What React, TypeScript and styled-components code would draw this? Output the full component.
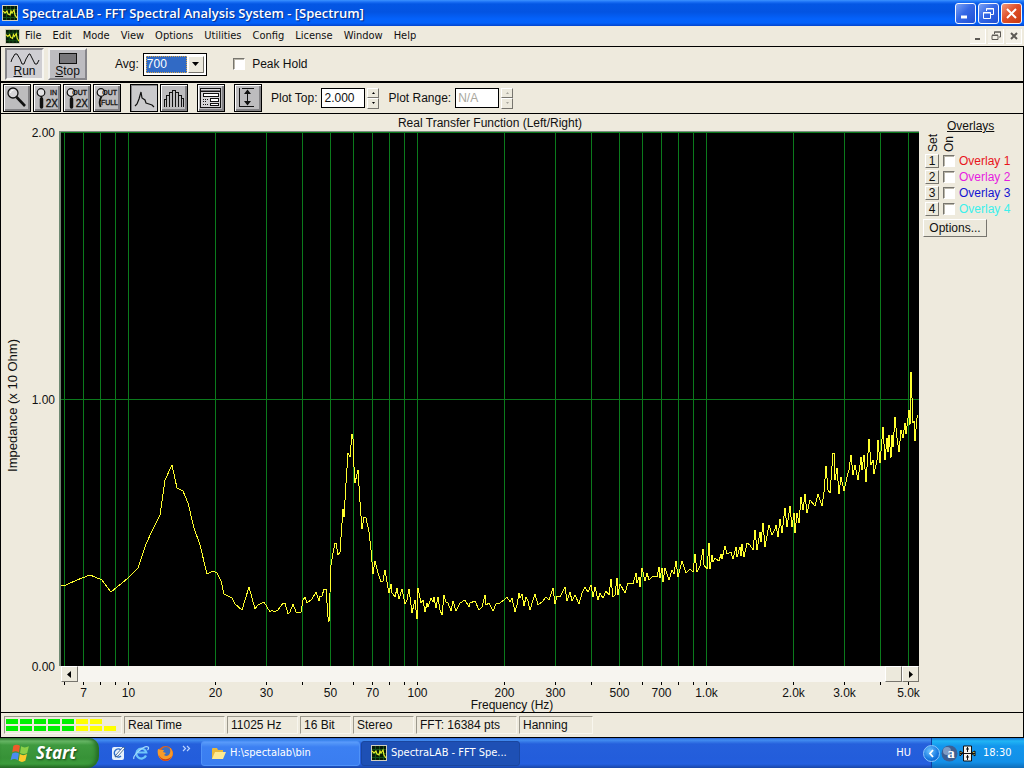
import React from "react";
import styled, { createGlobalStyle, css } from "styled-components";

const GlobalStyle = createGlobalStyle`
  *, *::before, *::after { box-sizing: border-box; }
  body { margin: 0; background: #eeeadd; }
  button, input, select { font: inherit; color: inherit; margin: 0; }
`;

const arial = `"Liberation Sans", Arial, sans-serif`;
const tahoma = `"DejaVu Sans Condensed", "DejaVu Sans", Tahoma, sans-serif`;

const Screen = styled.div`
  min-height: 100vh;
  display: flex;
  flex-direction: column;
  font-family: ${arial};
  font-size: 12px;
  line-height: 14px;
  color: #101010;
  background: #eeeadd;
`;

/* ---------- Title bar and menu ---------- */

const TitleBar = styled.header`
  height: 26px;
  flex: none;
  display: flex;
  align-items: center;
  gap: 4px;
  padding: 0 2px;
  background: linear-gradient(#3c93ff 0, #1a6ff5 2px, #0457e4 4px, #0354e2 12px, #0462fb 19px, #0362fa 23px, #0344cc 26px);
`;

const Title = styled.h1`
  flex: 1;
  margin: 0;
  font-family: "Open Sans", "Trebuchet MS", sans-serif;
  font-size: 13px;
  font-weight: 600;
  line-height: 18px;
  color: #fff;
  text-shadow: 1px 1px 1px #0a2a80;
  white-space: nowrap;
`;

const CaptionGroup = styled.div`
  display: flex;
  gap: 2px;
`;

const CaptionButton = styled.button<{ $close?: boolean }>`
  width: 21px;
  height: 21px;
  padding: 0;
  border: 1px solid #f4f7ff;
  border-radius: 3px;
  display: grid;
  place-items: center;
  background: ${(p) =>
    p.$close
      ? "linear-gradient(135deg, #f0997c, #e0502a 45%, #c8390f)"
      : "linear-gradient(135deg, #7ba2f5, #3568e6 45%, #1f4fd4)"};
`;

const MenuBar = styled.nav`
  height: 20px;
  flex: none;
  display: flex;
  align-items: center;
  padding: 0 2px 0 5px;
  font-family: ${tahoma};
  font-size: 11px;
`;

const MenuList = styled.div`
  flex: 1;
  display: flex;
  gap: 1px;
`;

const MenuItem = styled.button`
  border: 0;
  padding: 0 5px;
  background: none;
  line-height: 16px;
`;

const ChildButton = styled.button`
  width: 16px;
  height: 15px;
  margin-left: 2px;
  padding: 0;
  border: 0;
  border-bottom: 1px solid #fff;
  border-right: 1px solid #fff;
  background: #f3f0e6;
  display: grid;
  place-items: center;
`;

/* ---------- Toolbars ---------- */

const Workspace = styled.main`
  flex: 1;
  display: flex;
  flex-direction: column;
  border: 1px solid #000;
`;

const ToolRow = styled.div<{ $heavy?: boolean }>`
  flex: none;
  display: flex;
  align-items: center;
  height: ${(p) => (p.$heavy ? 36 : 31)}px;
  padding: ${(p) => (p.$heavy ? "0 4px" : "0 2px")};
  border-bottom: ${(p) => (p.$heavy ? 2 : 1)}px solid #000;
`;

const raised = css`
  border-style: solid;
  border-width: 1px;
  border-color: #fff #77756e #77756e #fff;
`;

const RunButton = styled.button<{ $down?: boolean }>`
  width: 39px;
  height: 32px;
  margin-right: 4px;
  padding: 2px 0 0;
  display: flex;
  flex-direction: column;
  align-items: center;
  justify-content: space-between;
  line-height: 13px;
  border: 2px solid;
  border-color: ${(p) => (p.$down ? "#85858a #f6f5f2 #f6f5f2 #85858a" : "#f2f1ee #87868a #87868a #f2f1ee")};
  background: ${(p) => (p.$down ? "#cfced2" : "#bdbcc0")};
`;

const Field = styled.label<{ $left?: number }>`
  display: flex;
  align-items: center;
  gap: 4px;
  margin-left: ${(p) => p.$left ?? 0}px;
  white-space: nowrap;
`;

const Combo = styled.span`
  display: flex;
  gap: 1px;
  width: 64px;
  height: 23px;
  padding: 2px;
  border: 1px solid #000;
  background: #fff;
`;

const ComboSelect = styled.select`
  appearance: none;
  flex: 1;
  min-width: 0;
  padding: 0;
  border: 1px dotted #d9a64a;
  border-radius: 0;
  background: #316ac5;
  color: #fff;
`;

const ComboArrow = styled.span`
  ${raised}
  width: 16px;
  display: grid;
  place-items: center;
  background: #ece9dc;
`;

const Check = styled.input`
  appearance: none;
  flex: none;
  width: 12px;
  height: 12px;
  border: 1px solid;
  border-color: #77756e #fff #fff #77756e;
  background: #fff;
  box-shadow: inset 1px 1px 0 #b9b6aa;
  &:checked { background: #316ac5; }
`;

const IconButton = styled.button<{ $down?: boolean }>`
  width: 28px;
  height: 28px;
  padding: 0;
  border: 1px solid #000;
  display: grid;
  place-items: center;
  background: ${(p) => (p.$down ? "#cbcacc" : "#bdbcbe")};
  box-shadow: ${(p) =>
    p.$down
      ? "inset 1px 1px 0 #858487"
      : "inset 1px 1px 0 #fff, inset -2px -2px 0 #828184"};
`;

const IconGroup = styled.div`
  display: flex;
  gap: 2px;
  margin-right: 9px;
`;

const NumberBox = styled.input`
  width: 44px;
  height: 20px;
  padding: 0 2px;
  border: 1px solid #000;
  background: #fff;
  &:disabled { color: #a9a79e; }
`;

const Spinner = styled.span`
  display: grid;
  grid-template-rows: 1fr 1fr;
  width: 12px;
  height: 21px;
  margin-left: 2px;
`;

const SpinButton = styled.button`
  ${raised}
  padding: 0;
  display: grid;
  place-items: center;
  background: #ece9dc;
`;

/* ---------- Plot area ---------- */

const Body = styled.div`
  flex: 1;
  display: flex;
  border-bottom: 1px solid #000;
`;

const PlotGrid = styled.section`
  flex: 1;
  min-width: 0;
  display: grid;
  grid-template-columns: 24px 30px minmax(0, 1fr);
  grid-template-rows: 17px minmax(300px, 1fr) 16px 30px;
  column-gap: 3px;
`;

const PlotTitle = styled.h2`
  grid-column: 3;
  margin: 0;
  font-size: 12px;
  font-weight: 400;
  line-height: 18px;
  text-align: center;
`;

const VerticalText = styled.span`
  writing-mode: vertical-rl;
  transform: rotate(180deg);
  white-space: nowrap;
`;

const AxisTitle = styled.div`
  grid-row: 2;
  grid-column: 1;
  display: grid;
  place-items: center;
  padding-top: 14px;
  font-size: 13px;
`;

const AxisValues = styled.div`
  grid-row: 2;
  grid-column: 2;
  display: flex;
  flex-direction: column;
  justify-content: space-between;
  align-items: flex-end;
  margin: -5px 3px -8px 0;
`;

const PlotFrame = styled.div`
  grid-row: 2;
  grid-column: 3;
  display: flex;
  min-height: 0;
  margin-left: -2px;
  border-left: 2px solid #6e8a72;
  border-top: 1px solid #7d8d80;
  background: #000;
`;

const PlotSvg = styled.svg`
  flex: 1;
  width: 100%;
  min-width: 0;
  height: auto;
  display: block;
`;

const ScrollBar = styled.div`
  grid-row: 3;
  grid-column: 3;
  display: flex;
  justify-content: space-between;
  background: #f7f5f0;
`;

const ScrollButton = styled.button`
  ${raised}
  width: 17px;
  height: 16px;
  padding: 0;
  display: grid;
  place-items: center;
  background: #ece9dc;
`;

const ScrollEnd = styled.div`
  display: flex;
`;

const TickArea = styled.div`
  grid-row: 4;
  grid-column: 3;
  text-align: center;
`;

const FrequencyTitle = styled.div`
  padding-left: 44px;
`;

const TickSvg = styled.svg`
  display: block;
  width: 100%;
  height: 16px;
  overflow: visible;
`;

const OverlayPanel = styled.aside`
  width: 104px;
  flex: none;
  display: flex;
  flex-direction: column;
  align-items: flex-start;
  padding: 5px 0 0 4px;
`;

const OverlayHeading = styled.h2`
  margin: 0 0 0 24px;
  font-size: 12px;
  font-weight: 400;
  text-decoration: underline;
`;

const OverlayColumns = styled.div`
  display: flex;
  gap: 2px;
  height: 19px;
  margin: 0 0 1px 3px;
  align-items: flex-end;
`;

const OverlayRow = styled.div`
  height: 16px;
  display: flex;
  align-items: center;
  gap: 4px;
  padding-left: 2px;
`;

const SetButton = styled.button`
  ${raised}
  width: 14px;
  height: 14px;
  padding: 0;
  line-height: 12px;
  background: #ece9dc;
`;

const OverlayLabel = styled.label<{ $color: string }>`
  display: flex;
  align-items: center;
  gap: 4px;
  color: ${(p) => p.$color};
  white-space: nowrap;
`;

const OptionsButton = styled.button`
  ${raised}
  width: 64px;
  height: 18px;
  margin-top: 2px;
  padding: 0;
  line-height: 14px;
  background: #ece9dc;
`;

/* ---------- Status bar ---------- */

const StatusBar = styled.footer`
  height: 24px;
  flex: none;
  display: flex;
  gap: 2px;
  padding: 3px;
`;

const StatusCell = styled.div<{ $width: number }>`
  width: ${(p) => p.$width}px;
  height: 18px;
  padding-left: 3px;
  border: 1px solid;
  border-color: #9b988c #f8f6ee #f8f6ee #9b988c;
  line-height: 16px;
  white-space: nowrap;
`;

const Meter = styled.div`
  width: 118px;
  height: 18px;
  display: grid;
  grid-template-columns: repeat(8, 12px);
  grid-template-rows: 5px 5px;
  align-content: center;
  gap: 2px;
  padding: 0 1px;
  border: 1px solid;
  border-color: #9b988c #f8f6ee #f8f6ee #9b988c;
`;

const MeterBlock = styled.span<{ $color: string }>`
  background: ${(p) => p.$color};
`;

/* ---------- Taskbar ---------- */

const TaskBar = styled.div`
  height: 30px;
  flex: none;
  display: flex;
  align-items: center;
  background: linear-gradient(#2a62d6 0, #428df0 2px, #2560dc 6px, #235ddb 20px, #245fe0 26px, #1a46a8 30px);
  font-family: ${tahoma};
  font-size: 11px;
  color: #fff;
`;

const StartButton = styled.button`
  width: 99px;
  height: 30px;
  flex: none;
  display: flex;
  align-items: center;
  gap: 6px;
  padding: 0 0 0 10px;
  border: 0;
  border-radius: 0 10px 12px 0;
  background: linear-gradient(#2f7a2f 0, #6cbb6a 3px, #3f9a3f 7px, #379237 20px, #3c9c3c 26px, #256b25 30px);
  box-shadow: inset -3px 0 4px #246a24;
  color: #fff;
  font-family: "Open Sans", "Franklin Gothic Medium", sans-serif;
  font-size: 17px;
  font-style: italic;
  font-weight: 700;
  text-shadow: 1px 1px 2px #17481a;
`;

const QuickLaunch = styled.div`
  width: 102px;
  flex: none;
  display: flex;
  align-items: center;
  gap: 7px;
  padding-left: 11px;
`;

const QuickButton = styled.button`
  padding: 0;
  border: 0;
  background: none;
  display: grid;
  place-items: center;
`;

const TaskButton = styled.button<{ $active?: boolean }>`
  width: 159px;
  height: 25px;
  margin-right: 1px;
  padding: 0 9px;
  display: flex;
  align-items: center;
  gap: 4px;
  border: 1px solid ${(p) => (p.$active ? "#1a469f" : "#4f92f8")};
  border-radius: 3px;
  background: ${(p) => (p.$active ? "#1e50b5" : "linear-gradient(#5a9cfa, #3c80f2 5px, #3a7df0)")};
  color: #fff;
  white-space: nowrap;
`;

const Language = styled.span`
  margin: 0 20px 0 auto;
`;

const Tray = styled.div`
  height: 30px;
  width: 93px;
  display: flex;
  align-items: center;
  gap: 1px;
  border-left: 1px solid #103f9f;
  background: linear-gradient(#1477d6 0, #21b5f5 3px, #1396ec 8px, #1290e8 24px, #0f6cb8 30px);
`;

const TrayToggle = styled.button`
  width: 17px;
  height: 17px;
  margin-left: -9px;
  padding: 0;
  border: 1px solid #8cc6fa;
  border-radius: 50%;
  display: grid;
  place-items: center;
  background: radial-gradient(circle at 6px 5px, #6fc4ff, #1578e0 60%, #0b50b8);
`;

const Clock = styled.time`
  margin-left: 6px;
`;

/* ---------- Icons ---------- */

const AppIcon = ({ size = 16 }: { size?: number }) => (
  <svg width={size} height={size} viewBox="0 0 16 16" aria-hidden="true">
    <rect x="0.5" y="0.5" width="15" height="15" fill="#071a07" stroke="#d3cfbd" />
    <path d="M4.5 1v14M8.5 1v14M12.5 1v14M1 4.5h14M1 8.5h14M1 12.5h14" stroke="#14501a" />
    <path d="M1 6l2 2 2-2 1 3 2 1 1-4 1 2 2-3 1 5 2 3" fill="none" stroke="#e6ee2a" strokeWidth="1.2" />
  </svg>
);

const Arrow = ({ d, color = "#000", w = 7, h = 7 }: { d: string; color?: string; w?: number; h?: number }) => (
  <svg width={w} height={h} viewBox={`0 0 ${w} ${h}`} aria-hidden="true">
    <path d={d} fill={color} />
  </svg>
);

const ToolIcon = ({ children }: { children: React.ReactNode }) => (
  <svg width="26" height="26" viewBox="0 0 26 26" fill="none" stroke="#111" aria-hidden="true">
    {children}
  </svg>
);

const ZoomGlyph = ({ top, bottom, small }: { top: string; bottom: string; small?: boolean }) => (
  <ToolIcon>
    <circle cx="7" cy="7.5" r="3.8" strokeWidth="1.2" fill="#e2e1e4" />
    {small ? (
      <path d="M7.5 11.500q-3 5-1 10.500" strokeWidth="1.800" />
    ) : (
      <>
        <path d="M7.500 11v3" strokeWidth="1.500" />
        <path d="M7.500 14v8" strokeWidth="3.500" strokeLinecap="round" />
      </>
    )}
    <g fill="#111" stroke="#111" strokeWidth="0.300" fontFamily="Liberation Sans, sans-serif">
      <text x="23" y="10" textAnchor="end" fontSize="7">{top}</text>
      {small ? (
        <text x="24" y="20" textAnchor="end" fontSize="7">{bottom}</text>
      ) : (
        <text x="24" y="22" textAnchor="end" fontSize="10">{bottom}</text>
      )}
    </g>
  </ToolIcon>
);

/* ---------- Chart data ---------- */

const PLOT_W = 858;
const PLOT_H = 534;
const DECADE = 289;
const TEN_HZ = 67.5;

const frequencies = [
  6, 7, 8, 9, 10, 20, 30, 40, 50, 60, 70, 80, 90, 100, 200, 300, 400, 500, 600, 700, 800, 900,
  1000, 2000, 3000, 4000, 5000,
];

const tickLabels: Record<number, string> = {
  7: "7", 10: "10", 20: "20", 30: "30", 50: "50", 70: "70", 100: "100", 200: "200", 300: "300",
  500: "500", 700: "700", 1000: "1.0k", 2000: "2.0k", 3000: "3.0k", 5000: "5.0k",
};

const xOf = (f: number) => Math.floor(TEN_HZ + DECADE * Math.log10(f / 10)) + 0.5;
const percentOf = (f: number) => `${(xOf(f) / PLOT_W) * 100}%`;

const curve = `0,453 5,453 16,448 29,443 41,448 50,460 67,446 77,436 85,412 92,397 99,383 104,348
111,333 116,356 122,359 127,371 133,396 139,413 146,442 152,439 156,441 160,449 163,462 171,466
174,472 181,478 188,455 194,477 197,473 203,470 209,480 211,478 213,480 217,478 222,471 224,471
227,482 229,480 232,472 235,480 240,480 242,468 244,465 246,471 251,467 255,460 258,469 259,464
261,464 263,457 265,457 267,485 268,490 269,461 270,433 272,421 274,411 275,411 277,423 279,420
281,391 282,377 283,385 285,351 287,321 289,325 291,302 292,307 293,335 294,351 297,338 299,370
301,397 303,385 305,386 308,400 310,418 312,442 314,429 317,441 320,450 322,449 324,438 326,450
328,461 330,452 331,461 334,465 336,456 338,467 341,457 344,472 346,468 348,457 351,481 354,468
356,487 357,456 360,471 362,468 364,480 366,471 367,475 370,466 372,470 373,465 375,476 377,465
379,478 381,483 383,463 385,470 387,471 390,479 392,469 395,479 399,471 404,468 408,475 409,471
414,469 418,478 421,475 424,463 425,473 428,471 432,479 435,472 439,471 443,468 446,465 449,470
451,466 454,480 456,473 458,461 459,466 461,462 463,474 465,465 467,469 469,478 472,468 474,462
477,473 482,469 485,465 488,468 492,456 494,472 496,464 499,465 504,455 506,469 509,460 511,469
514,463 518,472 521,461 524,455 527,460 530,453 532,465 534,455 537,468 539,461 542,466 545,459
548,463 550,447 552,465 554,463 556,446 557,463 559,452 564,461 567,451 572,452 575,441 576,451
578,445 579,455 581,436 584,449 586,441 588,448 592,444 596,445 598,435 599,446 601,436 602,450
604,436 608,448 611,438 613,442 615,429 617,445 621,429 623,435 625,441 629,437 632,440 634,422
636,440 639,434 642,417 643,433 646,437 648,411 649,437 651,423 652,430 654,426 658,429 660,422
661,427 664,414 666,422 670,420 672,427 675,415 676,425 679,415 680,424 681,412 683,425 686,411
689,413 692,418 694,398 696,418 699,400 700,410 702,391 704,415 708,393 711,403 714,397 715,393
717,405 719,387 721,401 724,376 726,395 729,374 731,395 733,381 734,401 736,381 738,391 740,365
742,378 744,362 746,381 749,368 754,374 757,362 761,374 763,360 765,334 767,358 769,361 770,348
772,321 773,321 774,348 776,336 778,362 780,345 783,359 786,345 788,338 790,323 792,343 794,333
797,348 800,325 801,338 803,323 805,350 808,307 810,333 812,328 813,342 816,328 817,308 819,331
822,295 824,328 826,306 827,320 828,303 830,326 831,303 832,315 834,285 836,306 838,320 840,298
842,306 844,291 845,302 848,278 849,293 850,240 852,291 853,289 854,309 856,286 857,283`;

const menus = ["File", "Edit", "Mode", "View", "Options", "Utilities", "Config", "License", "Window", "Help"];

const overlays = [
  { n: 1, color: "#e8141c" },
  { n: 2, color: "#e61be0" },
  { n: 3, color: "#1414d2" },
  { n: 4, color: "#3cf0ec" },
];

const statusCells: [string, number][] = [
  ["Real Time", 101],
  ["11025 Hz", 71],
  ["16 Bit", 51],
  ["Stereo", 61],
  ["FFT: 16384 pts", 101],
  ["Hanning", 74],
];

const meter = [..."GGGGGYY-", ..."GGGGGYYY"].map((c) =>
  c === "G" ? "#00f000" : c === "Y" ? "#ffff00" : "transparent",
);

const SpinPair = ({ name, disabled }: { name: string; disabled?: boolean }) => {
  const color = disabled ? "#a9a79e" : "#000";
  return (
    <Spinner>
      <SpinButton aria-label={`Increase ${name}`} disabled={disabled}>
        <Arrow w={5} h={3} d="M1 3L2.5 1L4 3z" color={color} />
      </SpinButton>
      <SpinButton aria-label={`Decrease ${name}`} disabled={disabled}>
        <Arrow w={5} h={3} d="M1 0L2.5 2L4 0z" color={color} />
      </SpinButton>
    </Spinner>
  );
};

const Chart = () => (
  <PlotSvg viewBox={`0 0 ${PLOT_W} ${PLOT_H}`} preserveAspectRatio="none" role="img" aria-label="Impedance against frequency">
    <g stroke="#0b7a1c" shapeRendering="crispEdges">
      {frequencies.map((f) => (
        <line key={f} x1={xOf(f)} x2={xOf(f)} y1="0" y2={PLOT_H} vectorEffect="non-scaling-stroke" />
      ))}
      <line x1="0" x2={PLOT_W} y1="0.5" y2="0.5" vectorEffect="non-scaling-stroke" />
      <line x1="0" x2={PLOT_W} y1="267.5" y2="267.5" vectorEffect="non-scaling-stroke" />
    </g>
    <polyline points={curve} fill="none" stroke="#ffff2e" shapeRendering="crispEdges" vectorEffect="non-scaling-stroke" />
  </PlotSvg>
);

const Ticks = () => (
  <TickSvg>
    {frequencies.map((f) => (
      <g key={f}>
        <line x1={percentOf(f)} x2={percentOf(f)} y1="0" y2="3" stroke="#000" shapeRendering="crispEdges" />
        {tickLabels[f] && (
          <text x={percentOf(f)} y="15" textAnchor="middle" fontSize="12" fill="#101010">
            {tickLabels[f]}
          </text>
        )}
      </g>
    ))}
  </TickSvg>
);

export default function App() {
  return (
    <Screen>
      <GlobalStyle />
      <TitleBar>
        <AppIcon />
        <Title>SpectraLAB - FFT Spectral Analysis System - [Spectrum]</Title>
        <CaptionGroup>
          <CaptionButton aria-label="Minimize">
            <svg width="13" height="13"><path d="M2 10h6" stroke="#fff" strokeWidth="3" /></svg>
          </CaptionButton>
          <CaptionButton aria-label="Restore">
            <svg width="13" height="13" fill="none" stroke="#fff">
              <path d="M4.5 4V1.5h7v6H9M4 2h8" />
              <path d="M1.5 5.5h7v6h-7zM1 6h8" />
            </svg>
          </CaptionButton>
          <CaptionButton $close aria-label="Close">
            <svg width="13" height="13"><path d="M2 2l9 9M11 2l-9 9" stroke="#fff" strokeWidth="2" /></svg>
          </CaptionButton>
        </CaptionGroup>
      </TitleBar>

      <MenuBar>
        <AppIcon size={15} />
        <MenuList>
          {menus.map((m) => (
            <MenuItem key={m}>{m}</MenuItem>
          ))}
        </MenuList>
        <ChildButton aria-label="Minimize spectrum">
          <svg width="10" height="10"><path d="M2 8h5" stroke="#5c5a55" strokeWidth="2" /></svg>
        </ChildButton>
        <ChildButton aria-label="Restore spectrum">
          <svg width="10" height="10" fill="none" stroke="#5c5a55">
            <path d="M3.5 3V1h6v5H8M3 1h7" />
            <path d="M1 4.5h6v4H1zM1 4h6" />
          </svg>
        </ChildButton>
        <ChildButton aria-label="Close spectrum">
          <svg width="10" height="10"><path d="M2 2l6 6M8 2L2 8" stroke="#5c5a55" strokeWidth="2" /></svg>
        </ChildButton>
      </MenuBar>

      <Workspace>
        <ToolRow $heavy>
          <RunButton $down>
            <svg width="30" height="13" fill="none" stroke="#111">
              <path d="M1 10l1-3 3-5h2l3 5 2 5h2l2-5 3-5h1l3 6 2 4h2l2-4" />
            </svg>
            <span><u>R</u>un</span>
          </RunButton>
          <RunButton>
            <svg width="30" height="13"><rect x="6.5" y="1.5" width="17" height="10" fill="#77767a" stroke="#111" /></svg>
            <span><u>S</u>top</span>
          </RunButton>
          <Field $left={24}>
            Avg:
            <Combo>
              <ComboSelect defaultValue="700">
                <option>700</option>
              </ComboSelect>
              <ComboArrow>
                <Arrow w={7} h={4} d="M0 0h7L3.5 4z" />
              </ComboArrow>
            </Combo>
          </Field>
          <Field $left={26}>
            <Check type="checkbox" />
            <span>&nbsp;Peak Hold</span>
          </Field>
        </ToolRow>

        <ToolRow>
          <IconGroup>
            <IconButton aria-label="Zoom">
              <ToolIcon>
                <circle cx="9" cy="8" r="5" fill="#d6d5d8" strokeWidth="1.3" />
                <path d="M6.5 8a3 3 0 0 1 3-3" stroke="#fff" />
                <path d="M12.500 12l8.500 9" strokeWidth="2.600" />
              </ToolIcon>
            </IconButton>
            <IconButton aria-label="Zoom in 2X"><ZoomGlyph top="IN" bottom="2X" /></IconButton>
            <IconButton aria-label="Zoom out 2X"><ZoomGlyph top="OUT" bottom="2X" /></IconButton>
            <IconButton aria-label="Zoom out full"><ZoomGlyph top="OUT" bottom="FULL" small /></IconButton>
          </IconGroup>
          <IconGroup>
            <IconButton $down aria-label="Line plot">
              <ToolIcon><path d="M4 21l2-2 2-5 2-7 1 6 3 2 1 3 3 1 3 1 2 2" strokeWidth="1.200" /></ToolIcon>
            </IconButton>
            <IconButton aria-label="Bar plot">
              <ToolIcon>
                <path
                  d="M3.500 22v-8h2v8V10.500h3V22V7.500h3V22V5.500h3V22V7.500h3V22V10.500h3V22v-8.500h2V22"
                  shapeRendering="crispEdges"
                />
              </ToolIcon>
            </IconButton>
          </IconGroup>
          <IconGroup>
            <IconButton aria-label="Display settings">
              <ToolIcon>
                <g shapeRendering="crispEdges">
                  <path d="M2.5 3.5h20v19h-20z" fill="#d5d4d6" />
                  <path d="M3 5.5h19" stroke="#77767a" strokeWidth="2" />
                  <path d="M3 6.500h19" />
                  <path d="M5.5 8.5h15v3h-15zM12.5 13.5h8v3h-8zM12.5 18.5h8v2h-8z" fill="#fff" />
                  <path d="M5 14.500h5M5 16.500h4M5 19.500h6" strokeDasharray="1 1" />
                </g>
              </ToolIcon>
            </IconButton>
          </IconGroup>
          <IconGroup>
            <IconButton aria-label="Vertical scale">
              <ToolIcon>
                <path d="M7 3.5h12M4 21.5h15M4.5 3v18M12.5 5v15" shapeRendering="crispEdges" />
                <path d="M9 9l3.500-4.500L16 9zM9 16l3.500 4.500L16 16z" fill="#111" stroke="none" />
              </ToolIcon>
            </IconButton>
          </IconGroup>
          <Field>
            Plot Top:
            <NumberBox defaultValue="2.000" />
          </Field>
          <SpinPair name="plot top" />
          <Field $left={9}>
            Plot Range:
            <NumberBox defaultValue="N/A" disabled />
          </Field>
          <SpinPair name="plot range" disabled />
        </ToolRow>

        <Body>
          <PlotGrid>
            <PlotTitle>Real Transfer Function (Left/Right)</PlotTitle>
            <AxisTitle><VerticalText>Impedance (x 10 Ohm)</VerticalText></AxisTitle>
            <AxisValues>
              <span>2.00</span>
              <span>1.00</span>
              <span>0.00</span>
            </AxisValues>
            <PlotFrame><Chart /></PlotFrame>
            <ScrollBar>
              <ScrollButton aria-label="Scroll left"><Arrow d="M5 0v7L1 3.5z" /></ScrollButton>
              <ScrollEnd>
                <ScrollButton aria-label="Scroll position" />
                <ScrollButton aria-label="Scroll right"><Arrow d="M2 0v7L6 3.5z" /></ScrollButton>
              </ScrollEnd>
            </ScrollBar>
            <TickArea>
              <Ticks />
              <FrequencyTitle>Frequency (Hz)</FrequencyTitle>
            </TickArea>
          </PlotGrid>

          <OverlayPanel>
            <OverlayHeading>Overlays</OverlayHeading>
            <OverlayColumns>
              <VerticalText>Set</VerticalText>
              <VerticalText>On</VerticalText>
            </OverlayColumns>
            {overlays.map((o) => (
              <OverlayRow key={o.n}>
                <SetButton aria-label={`Set overlay ${o.n}`}>{o.n}</SetButton>
                <OverlayLabel $color={o.color}>
                  <Check type="checkbox" />
                  Overlay {o.n}
                </OverlayLabel>
              </OverlayRow>
            ))}
            <OptionsButton>Options...</OptionsButton>
          </OverlayPanel>
        </Body>

        <StatusBar>
          <Meter>
            {meter.map((c, i) => (
              <MeterBlock key={i} $color={c} />
            ))}
          </Meter>
          {statusCells.map(([text, width]) => (
            <StatusCell key={text} $width={width}>{text}</StatusCell>
          ))}
        </StatusBar>
      </Workspace>

      <TaskBar>
        <StartButton>
          <svg width="20" height="20" viewBox="0 0 18 18" aria-hidden="true">
            <path d="M3 2.500q3-2 6 0l-1 6q-3-2-6 0z" fill="#ef5a2a" />
            <path d="M10 3q3 2 7 0l-1.500 6q-3 2-6.500 0z" fill="#8cd048" />
            <path d="M2 9.500q3-2 6 0l-1 6q-3-2-6.500 0z" fill="#4a8cf0" />
            <path d="M8.800 10q3 2 6.500 0l-1.500 6q-3 2-6 0z" fill="#fbc92c" />
          </svg>
          Start
        </StartButton>
        <QuickLaunch>
          <QuickButton aria-label="Show desktop">
            <svg width="16" height="16" viewBox="0 0 16 16">
              <rect x="2" y="2" width="12" height="13" rx="2" fill="#e6f1fc" />
              <path d="M11 5a4 4 0 1 0 0 6" fill="none" stroke="#2a6cc8" strokeWidth="1.5" />
              <path d="M6 10l7-8 2 1-7 8-3 1z" fill="#fff" stroke="#27507f" strokeWidth=".8" />
            </svg>
          </QuickButton>
          <QuickButton aria-label="Internet Explorer">
            <svg width="17" height="16" viewBox="0 0 17 16" fill="none">
              <path d="M13 10.5a5 5 0 1 1 .3-3H5" stroke="#6fc6fa" strokeWidth="2.2" />
              <path d="M1 14C-1 11 11 0 15 2c1 .5.5 2-.5 3" stroke="#a8ddfc" strokeWidth="1.2" />
            </svg>
          </QuickButton>
          <QuickButton aria-label="Firefox">
            <svg width="17" height="17" viewBox="0 0 17 17">
              <circle cx="8.5" cy="8.5" r="7.5" fill="#e2611b" />
              <circle cx="9" cy="6.5" r="4.5" fill="#3b6fc4" />
              <path d="M1 4l3 1 3 0-1 2 3 1-2 2c2 2 5 1 6-2 1-3 0-5-1-6 5 3 5 10 0 13-6 3-13-3-11-11z" fill="#f79a28" />
              <path d="M2 10c2 5 9 6 13 1-2 6-11 7-13-1z" fill="#c93a14" />
            </svg>
          </QuickButton>
          <QuickButton aria-label="More">
            <svg width="10" height="16" viewBox="0 0 10 16" fill="none" stroke="#b9d3ff">
              <path d="M2 1l2.500 2.500L2 6M6 1l2.500 2.500L6 6" strokeWidth="1.200" />
            </svg>
          </QuickButton>
        </QuickLaunch>
        <TaskButton>
          <svg width="15" height="13" viewBox="0 0 15 13" aria-hidden="true">
            <path d="M1 2q0-1 1-1h4l1 2h5v9H1z" fill="#e8b93c" />
            <path d="M4 5h11l-3 7H1z" fill="#fdea92" />
          </svg>
          H:\spectalab\bin
        </TaskButton>
        <TaskButton $active>
          <AppIcon />
          SpectraLAB - FFT Spe...
        </TaskButton>
        <Language>HU</Language>
        <Tray>
          <TrayToggle aria-label="Show hidden icons">
            <svg width="9" height="9"><path d="M6 1L3 4.5 6 8" fill="none" stroke="#fff" strokeWidth="1.8" /></svg>
          </TrayToggle>
          <svg width="17" height="17" viewBox="0 0 17 17" aria-hidden="true">
            <circle cx="8.5" cy="8.5" r="8" fill="#3c5f92" />
            <circle cx="6" cy="6" r="4" fill="#7f9cc4" />
            <text x="10" y="13" textAnchor="middle" fontFamily="Liberation Serif, serif" fontSize="15" fontWeight="700" fill="#fff">a</text>
          </svg>
          <svg width="17" height="17" viewBox="0 0 17 17" aria-hidden="true">
            <path d="M1 6l3 2-3 3zM16 6l-4 2 4 3z" fill="#efe25a" stroke="#111" />
            <path d="M4.500 1h8v15h-8z" fill="#f4f4ec" stroke="#111" />
            <path d="M8.500 2v5M7 4h3M1 8.500h15M8.500 10v5M7 12h3" stroke="#111" />
          </svg>
          <Clock>18:30</Clock>
        </Tray>
      </TaskBar>
    </Screen>
  );
}
